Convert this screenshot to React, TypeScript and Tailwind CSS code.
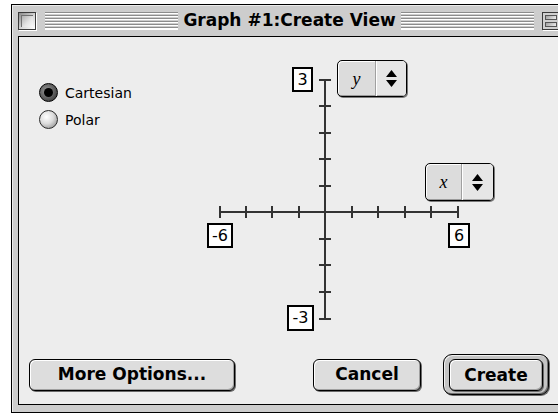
import React from "react";

function Stripes() {
  return (
    <div className="flex-1 h-[18px] bg-[repeating-linear-gradient(to_bottom,#8c8c8c_0px,#8c8c8c_1px,#ffffff_1px,#ffffff_2px,#cdcdcd_2px,#cdcdcd_3px)] shadow-[inset_0_-1px_0_#ffffff]" />
  );
}

function Radio({ checked, label }: { checked?: boolean; label: string }) {
  return (
    <div className="flex items-center gap-[7px]">
      {checked ? (
        <div className="w-[19px] h-[19px] rounded-full border border-black bg-[radial-gradient(circle_at_40%_40%,#9a9a9a,#4a4a4a_70%,#2a2a2a)] flex items-center justify-center">
          <div className="w-[9px] h-[9px] rounded-full bg-black" />
        </div>
      ) : (
        <div className="w-[19px] h-[19px] rounded-full border border-[#2a2a2a] bg-[radial-gradient(circle_at_38%_35%,#ffffff,#dcdcdc_45%,#8e8e8e_90%)]" />
      )}
      <span className="text-[14px] leading-none text-black">{label}</span>
    </div>
  );
}

function Arrows() {
  return (
    <svg width="11" height="17" viewBox="0 0 11 17">
      <polygon points="5.5,0 11,7 0,7" fill="#000" />
      <polygon points="0,10 11,10 5.5,17" fill="#000" />
    </svg>
  );
}

function Popup({ letter, leftW, className }: { letter: string; leftW: string; className: string }) {
  return (
    <div
      className={
        "absolute flex rounded-[5px] border border-black bg-[#dcdcdc] overflow-hidden shadow-[1px_1px_0_#7a7a7a,inset_1px_1px_0_#ffffff,inset_-1px_-1px_0_#9a9a9a] " +
        className
      }
    >
      <div className={"flex items-center justify-center border-r border-[#a0a0a0] font-['Liberation_Serif',serif] italic text-[18px] leading-none text-black " + leftW}>
        {letter}
      </div>
      <div className="flex-1 flex items-center justify-center bg-[#e6e6e6] shadow-[inset_1px_0_0_#ffffff,inset_0_-1px_0_#a8a8a8]">
        <Arrows />
      </div>
    </div>
  );
}

function Label({ text, className }: { text: string; className: string }) {
  return (
    <div
      className={
        "absolute flex items-center justify-center border-2 border-black bg-white text-[16px] leading-none text-black " +
        className
      }
    >
      {text}
    </div>
  );
}

function Graph() {
  const c = 125;
  const hy = 157;
  const vTicks = [25, 51, 78, 104, 131, 184, 210, 237, 264];
  const hTicks = [20, 46, 72, 99, 152, 178, 205, 231, 258];
  return (
    <div className="relative w-[300px] h-[280px] mt-[18px] shrink-0">
      <svg className="absolute left-0 top-0" width="300" height="280" viewBox="0 0 300 280">
        <g stroke="#333333" strokeWidth="2">
          <line x1={c} y1={25} x2={c} y2={264} />
          <line x1={20} y1={hy} x2={258} y2={hy} />
          {vTicks.map((y) => (
            <line key={"v" + y} x1={c - 6} y1={y} x2={c + 6} y2={y} />
          ))}
          {hTicks.map((x) => (
            <line key={"h" + x} x1={x} y1={hy - 6} x2={x} y2={hy + 6} />
          ))}
        </g>
      </svg>
      <Label text="3" className="left-[92px] top-[12px] w-[21px] h-[25px]" />
      <Label text="-6" className="left-[7px] top-[168px] w-[26px] h-[25px]" />
      <Label text="6" className="left-[248px] top-[168px] w-[22px] h-[25px]" />
      <Label text="-3" className="left-[87px] top-[250px] w-[27px] h-[26px]" />
      <Popup letter="y" leftW="w-[38px]" className="left-[137px] top-[5px] w-[70px] h-[37px]" />
      <Popup letter="x" leftW="w-[36px]" className="left-[225px] top-[108px] w-[69px] h-[38px]" />
    </div>
  );
}

const btn =
  "h-[32px] rounded-[6px] border border-black bg-[#dddddd] shadow-[inset_1px_1px_0_#ffffff,inset_-1px_-1px_0_#a0a0a0,1px_1px_0_#6a6a6a] font-bold text-[17px] leading-none text-black flex items-center justify-center";

export default function App() {
  return (
    <div className="w-[558px] h-[413px] bg-white overflow-hidden pt-[4px] pl-[11px] font-['DejaVu_Sans',sans-serif]">
      <div className="w-[556px] h-[409px] border border-black bg-[#cdcdcd] flex flex-col shadow-[inset_1px_1px_0_#ececec]">
        {/* Title bar */}
        <div className="h-[31px] shrink-0 flex items-center px-[6px]">
          <div className="w-[18px] h-[18px] border border-[#3a3a3a] shadow-[1px_1px_0_#ffffff] bg-[linear-gradient(135deg,#8a8a8a,#d8d8d8_55%,#ffffff)] p-[2px]">
            <div className="w-full h-full bg-[linear-gradient(135deg,#a8a8a8,#e4e4e4_60%,#f8f8f8)] shadow-[inset_1px_1px_0_#707070]" />
          </div>
          <div className="w-[9px]" />
          <Stripes />
          <div className="px-[5px] font-bold text-[17px] leading-none text-black whitespace-nowrap">Graph #1:Create View</div>
          <Stripes />
          <div className="w-[8px]" />
          <div className="w-[18px] h-[18px] border border-[#3a3a3a] shadow-[1px_1px_0_#ffffff] bg-[#d0d0d0] p-[2px] flex flex-col gap-[2px]">
            <div className="flex-1 bg-[linear-gradient(135deg,#a0a0a0,#eeeeee)] border border-[#555]" />
            <div className="flex-1 bg-[linear-gradient(135deg,#a0a0a0,#eeeeee)] border border-[#555]" />
          </div>
        </div>
        {/* Content */}
        <div className="flex-1 mx-[6px] mb-[7px] border border-black bg-[#ededed] flex flex-col">
          <div className="flex-1 flex">
            <div className="w-[181px] shrink-0 pl-[20px] pt-[46px] flex flex-col gap-[8px]">
              <Radio checked label="Cartesian" />
              <Radio label="Polar" />
            </div>
            <Graph />
          </div>
          <div className="flex items-center px-[10px] pb-[9px]">
            <button className={btn + " w-[206px]"}>More Options...</button>
            <div className="flex-1" />
            <button className={btn + " w-[108px]"}>Cancel</button>
            <div className="w-[22px]" />
            <div className="w-[106px] h-[41px] rounded-[9px] border border-black bg-[#c4c4c4] shadow-[inset_1px_1px_0_#f0f0f0,inset_-1px_-1px_0_#707070,1px_1px_0_#6a6a6a] py-[4px] px-[5px] flex">
              <button className={btn + " flex-1 h-[31px]"}>Create</button>
            </div>
          </div>
        </div>
      </div>
    </div>
  );
}
